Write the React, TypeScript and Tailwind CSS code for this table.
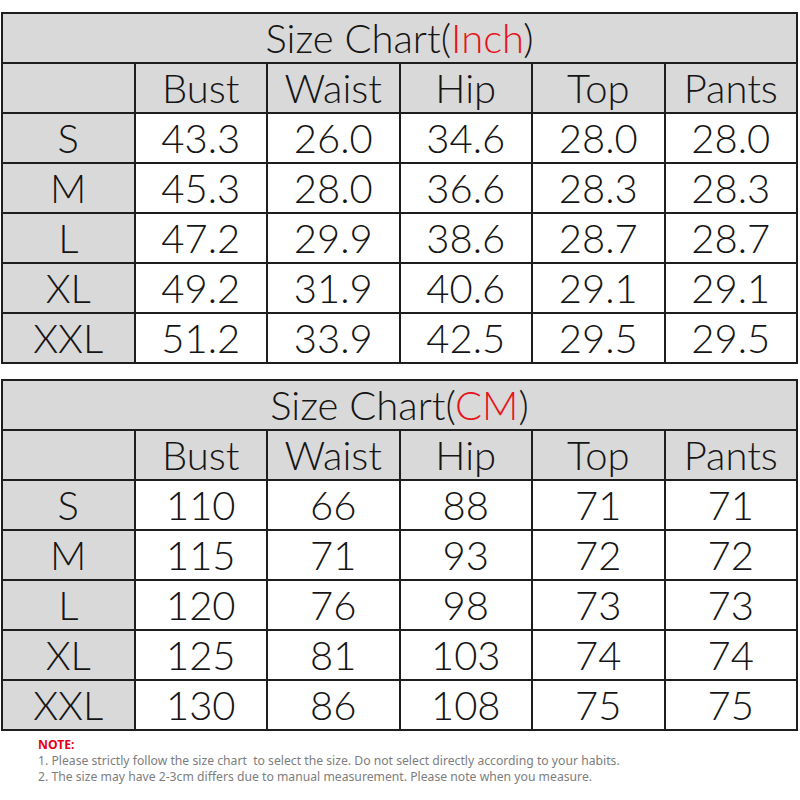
import React from "react";

const inch = [
  ["S", "43.3", "26.0", "34.6", "28.0", "28.0"],
  ["M", "45.3", "28.0", "36.6", "28.3", "28.3"],
  ["L", "47.2", "29.9", "38.6", "28.7", "28.7"],
  ["XL", "49.2", "31.9", "40.6", "29.1", "29.1"],
  ["XXL", "51.2", "33.9", "42.5", "29.5", "29.5"],
];
const cm = [
  ["S", "110", "66", "88", "71", "71"],
  ["M", "115", "71", "93", "72", "72"],
  ["L", "120", "76", "98", "73", "73"],
  ["XL", "125", "81", "103", "74", "74"],
  ["XXL", "130", "86", "108", "75", "75"],
];
const headers = ["", "Bust", "Waist", "Hip", "Top", "Pants"];

function Chart({ unit, rows, className }: { unit: string; rows: string[][]; className: string }) {
  return (
    <div className={`ml-px w-[797px] border-l-2 border-t-2 border-[#1e1e1e] grid grid-cols-6 ${className}`}>
      <div className="col-span-6 h-[50px] border-r-2 border-b-2 border-[#1e1e1e] bg-[#d9d9d9] flex items-end justify-center pb-[4px] leading-none">
        <span>
          Size Chart(<span className="text-[#e8141b]">{unit}</span>)
        </span>
      </div>
      {headers.map((h, i) => (
        <div
          key={"h" + i}
          className="h-[50px] border-r-2 border-b-2 border-[#1e1e1e] bg-[#d9d9d9] flex items-end justify-center pb-[4px] leading-none"
        >
          {h}
        </div>
      ))}
      {rows.map((r, ri) =>
        r.map((c, ci) => (
          <div
            key={ri + "-" + ci}
            className={`h-[50px] border-r-2 border-b-2 border-[#1e1e1e] flex items-end justify-center pb-[4px] leading-none ${
              ci === 0 ? "bg-[#d9d9d9]" : "bg-white"
            }`}
          >
            {c}
          </div>
        ))
      )}
    </div>
  );
}

export default function App() {
  return (
    <div className="w-[800px] h-[800px] bg-white overflow-hidden text-[#151515] text-[40px] font-light" style={{ fontFamily: "Lato, 'Noto Sans', sans-serif" }}>
      <Chart unit="Inch" rows={inch} className="mt-[12px]" />
      <Chart unit="CM" rows={cm} className="mt-[15px]" />
      <div className="ml-[38px] mt-[6px] text-[12.2px] leading-[16px] font-normal" style={{ fontFamily: "'Noto Sans', sans-serif" }}>
        <div className="text-[#e60012] font-bold">NOTE:</div>
        <div className="text-[#7d7d7d]">1. Please strictly follow the size chart&nbsp; to select the size. Do not select directly according to your habits.</div>
        <div className="text-[#7d7d7d]">2. The size may have 2-3cm differs due to manual measurement. Please note when you measure.</div>
      </div>
    </div>
  );
}
